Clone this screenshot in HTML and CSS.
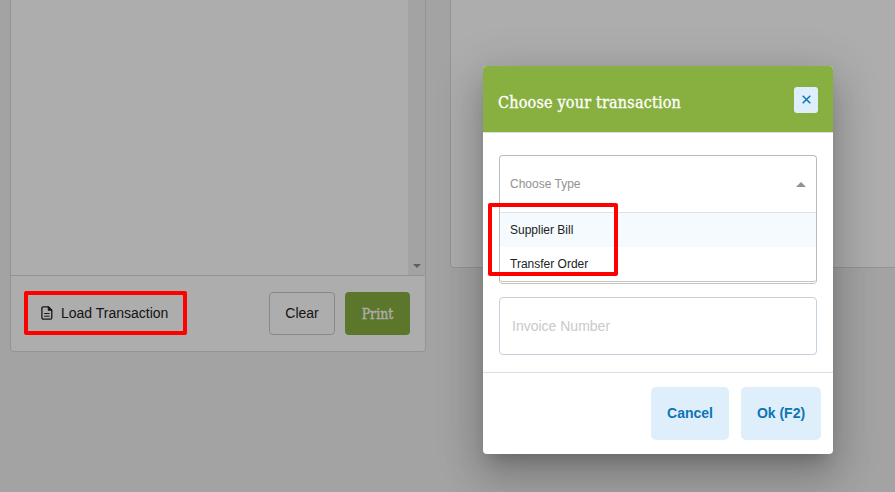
FILE: index.html
```html
<!DOCTYPE html>
<html lang="en">
<head>
  <meta charset="UTF-8" />
  <meta name="viewport" content="width=device-width, initial-scale=1.0" />
  <title>Choose your transaction</title>
  <link rel="stylesheet" href="styles.css">
</head>
<body>
  <main class="page">
    <section class="panel panel-left">
      <div class="list">
        <div class="scrollbar"><span class="arrow-down"></span></div>
      </div>
      <div class="actions">
        <button class="load-btn">
          <svg width="12" height="14" viewBox="0 0 12 14" fill="none" stroke="currentColor" stroke-width="1.3">
            <path d="M2.2 .8h5.3l3.3 3.3v7.7a1.3 1.3 0 0 1-1.3 1.3H2.2A1.3 1.3 0 0 1 .9 11.8V2.1A1.3 1.3 0 0 1 2.2.8z" />
            <path d="M7.2 .8v3.6h3.6z" fill="currentColor" stroke-width=".8" />
            <path d="M3.2 7.5h5.4M3.2 10.2h5.4" stroke-width="1" />
          </svg>
          Load Transaction
        </button>
        <button class="clear-btn">Clear</button>
        <button class="print-btn">Print</button>
      </div>
    </section>
    <section class="panel panel-right"></section>
  </main>

  <div class="backdrop"></div>

  <div class="modal">
    <div class="modal-header">
      <h2>Choose your transaction</h2>
      <button class="close-btn">
        <svg width="9" height="9" viewBox="0 0 9 9" fill="none" stroke="currentColor" stroke-width="1.5">
          <path d="M.7 .7l7.6 7.6M8.3 .7L.7 8.3" />
        </svg>
      </button>
    </div>
    <div class="modal-body">
      <div class="select">
        <div class="select-label">Choose Type <span class="arrow-up"></span></div>
        <div class="option active">Supplier Bill</div>
        <div class="option">Transfer Order</div>
      </div>
      <input type="text" class="invoice" placeholder="Invoice Number" />
    </div>
    <div class="modal-footer">
      <button>Cancel</button>
      <button>Ok (F2)</button>
    </div>
  </div>

  <div class="marker marker-load"></div>
  <div class="marker marker-options"></div>
</body>
</html>
```

FILE: styles.css
```css
:root {
  --green: #88b040;
  --blue: #0c75b5;
  --light-blue: #dfeefb;
  --border: #dadada;
}

* {
  box-sizing: border-box;
  margin: 0;
  padding: 0;
}

body {
  position: relative;
  height: 492px;
  overflow: hidden;
  background-color: #f1f1f1;
  font-family: "Liberation Sans", Arial, sans-serif;
  color: #222;
}

button {
  font-family: inherit;
  border: none;
}

.page {
  display: flex;
  align-items: flex-start;
  gap: 24px;
  padding-left: 10px;
}

.panel {
  flex: none;
  background-color: #fff;
  border: 1px solid var(--border);
  border-top: none;
  border-radius: 0 0 4px 4px;
}

.panel-left {
  width: 416px;
  height: 352px;
}

.panel-right {
  width: 460px;
  height: 268px;
}

.list {
  display: flex;
  justify-content: flex-end;
  height: 276px;
  border-bottom: 1px solid var(--border);
}

.scrollbar {
  display: flex;
  align-items: flex-end;
  justify-content: center;
  width: 17px;
  padding-bottom: 7px;
  background-color: #f1f1f1;
}

.arrow-down {
  border: 4px solid transparent;
  border-top-color: #8d8d8d;
  border-bottom: none;
}

.actions {
  display: flex;
  align-items: center;
  gap: 10px;
  height: 75px;
  padding: 0 15px;
}

.load-btn {
  display: flex;
  align-items: center;
  gap: 8px;
  margin-right: auto;
  padding: 0 0 2px 15px;
  background: none;
  color: #222;
  font-size: 14px;
}

.clear-btn,
.print-btn {
  height: 43px;
  border-radius: 4px;
}

.clear-btn {
  width: 66px;
  padding-bottom: 2px;
  border: 1px solid #c9c9c9;
  background: none;
  color: #222;
  font-size: 14px;
}

.print-btn {
  width: 65px;
  background-color: var(--green);
  color: #fff;
  font-family: "Roboto Slab", "DejaVu Serif Condensed", "DejaVu Serif", serif;
  font-size: 14px;
  -webkit-text-stroke: 0.3px #fff;
}

.backdrop {
  position: absolute;
  inset: 0;
  background-color: rgba(0, 0, 0, 0.32);
}

.modal {
  position: absolute;
  top: 66px;
  left: 483px;
  width: 350px;
  height: 388px;
  border-radius: 4px;
  background-color: #fff;
  box-shadow: 0 11px 15px -7px rgba(0, 0, 0, 0.2),
    0 24px 38px 3px rgba(0, 0, 0, 0.14),
    0 9px 46px 8px rgba(0, 0, 0, 0.12);
}

.modal-header {
  display: flex;
  justify-content: space-between;
  height: 67px;
  padding: 21px 15px 0;
  border-bottom: 1px solid #dedede;
  border-radius: 4px 4px 0 0;
  background-color: var(--green);
  background-clip: padding-box;
}

.modal-header h2 {
  color: #fff;
  font-family: "Roboto Slab", "DejaVu Serif Condensed", "DejaVu Serif", serif;
  font-size: 16px;
  font-weight: 400;
  line-height: 31px;
  letter-spacing: 0.2px;
  white-space: nowrap;
  -webkit-text-stroke: 0.3px #fff;
}

.close-btn {
  display: flex;
  align-items: center;
  justify-content: center;
  width: 24px;
  height: 26px;
  padding-bottom: 2px;
  border-radius: 3px;
  background-color: var(--light-blue);
  color: var(--blue);
}

.modal-body {
  height: 240px;
  padding: 22px 16px 0;
  border-bottom: 1px solid #dedfe3;
}

.select {
  height: 129px;
  margin-bottom: 13px;
  border: 1px solid #bcbcbc;
  border-bottom: 3px double #c4c4c4;
  border-radius: 4px;
  font-size: 12px;
}

.select-label {
  display: flex;
  align-items: center;
  justify-content: space-between;
  height: 57px;
  padding: 0 10px;
  border-bottom: 1px solid #dde2e6;
  color: #929292;
}

.arrow-up {
  border: 5px solid transparent;
  border-top: none;
  border-bottom-color: #929292;
}

.option {
  height: 34px;
  padding-left: 10px;
  line-height: 34px;
}

.option.active {
  background-color: #f5fafe;
}

.invoice {
  display: block;
  width: 318px;
  height: 58px;
  padding: 0 12px;
  border: 1px solid #c5d1dc;
  border-radius: 4px;
  font-family: inherit;
  font-size: 14px;
}

.invoice::placeholder {
  color: #c9c9c9;
}

.modal-footer {
  display: flex;
  justify-content: flex-end;
  gap: 12px;
  padding: 14px 12px;
}

.modal-footer button {
  width: 78px;
  height: 53px;
  padding-bottom: 2px;
  border-radius: 5px;
  background-color: var(--light-blue);
  color: var(--blue);
  font-size: 14px;
  font-weight: bold;
}

.modal-footer button:last-child {
  width: 80px;
}

/* red callout boxes */
.marker {
  position: absolute;
  border: 4px solid #fe0000;
  border-radius: 2px;
}

.marker-load {
  top: 291px;
  left: 24px;
  width: 163px;
  height: 44px;
}

.marker-options {
  top: 203px;
  left: 488px;
  width: 130px;
  height: 73px;
}
```
